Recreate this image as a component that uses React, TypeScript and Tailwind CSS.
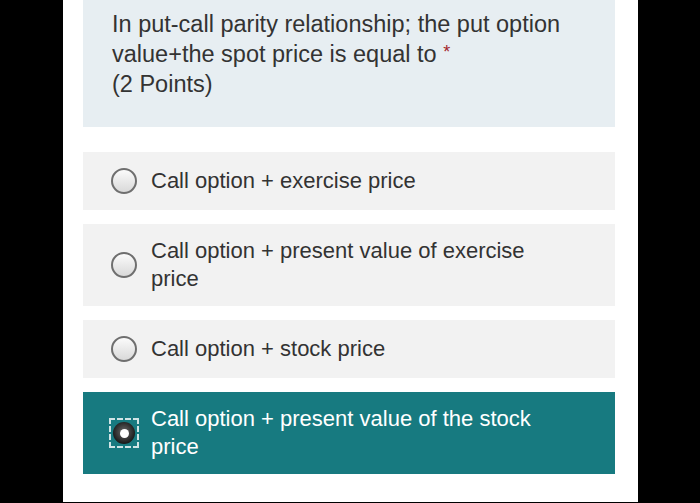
import React from "react";

function Radio({ checked }: { checked?: boolean }) {
  if (checked) {
    return (
      <div className="w-[30px] h-[30px] shrink-0 border-2 border-dashed border-white/80 flex items-center justify-center">
        <div className="w-[22px] h-[22px] rounded-full bg-[radial-gradient(circle_at_50%_45%,#6b6b6b,#1b1b1b_70%)] flex items-center justify-center">
          <div className="w-[9px] h-[9px] rounded-full bg-white" />
        </div>
      </div>
    );
  }
  return (
    <div className="w-[26px] h-[26px] shrink-0 rounded-full border-2 border-[#6f6f6f] bg-[linear-gradient(#fbfbfb,#d9d9d9)]" />
  );
}

function Option({ text, checked, single }: { text: React.ReactNode; checked?: boolean; single?: boolean }) {
  return (
    <div
      className={
        "flex items-center pr-4 " +
        (single ? "py-[15px] " : "py-[13px] ") +
        (checked ? "bg-[#177a80] text-white pl-[26px] gap-[12px]" : "bg-[#f2f2f2] text-[#333] pl-[28px] gap-[14px]")
      }
    >
      <Radio checked={checked} />
      <div className="text-[22px] leading-[28px]">{text}</div>
    </div>
  );
}

export default function App() {
  return (
    <div className="w-[700px] h-[503px] bg-black flex" style={{ fontFamily: '"Liberation Sans", Arial, sans-serif' }}>
      <div className="ml-[63px] w-[575px] h-[502px] bg-white pl-[20px] pr-[23px]">
        <div className="bg-[#e7eef2] h-[127px] pl-[29px] pt-[9px] text-[#333] text-[23.5px] leading-[30px]">
          <div>In put-call parity relationship; the put option</div>
          <div>
            value+the spot price is equal to{" "}
            <span className="text-[#a4262c] text-[18px] align-top relative top-[-2px]">*</span>
          </div>
          <div>(2 Points)</div>
        </div>
        <div className="mt-[25px] flex flex-col gap-[14px]">
          <Option single text="Call option + exercise price" />
          <Option text={<>Call option + present value of exercise<br />price</>} />
          <Option single text="Call option + stock price" />
          <Option checked text={<>Call option + present value of the stock<br />price</>} />
        </div>
      </div>
    </div>
  );
}
